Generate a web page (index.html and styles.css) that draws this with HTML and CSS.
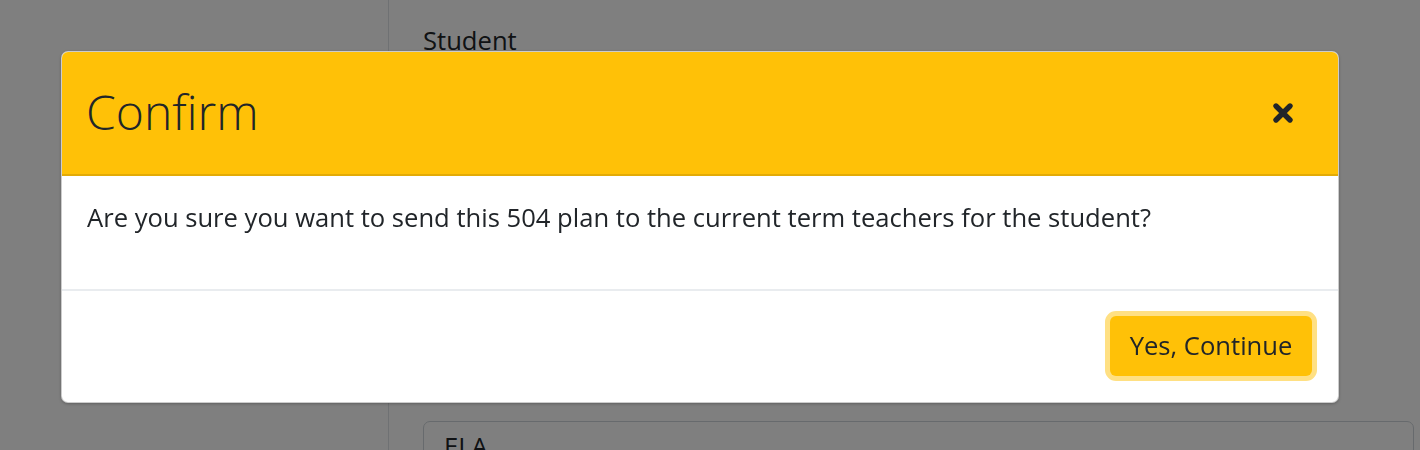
FILE: index.html
```html
<!DOCTYPE html>
<html>
<head>
<meta charset="utf-8">
<link rel="stylesheet" href="styles.css">
</head>
<body>
<div class="page">
  <aside class="sidebar"></aside>
  <main class="content">
    <div class="label">Student</div>
    <div class="spacer"></div>
    <div class="card"><div class="card-title">ELA</div></div>
  </main>
</div>
<div class="backdrop"></div>
<div class="modal">
  <div class="modal-header">
    <h2 class="modal-title">Confirm</h2>
    <button class="close" aria-label="Close">
      <svg width="22" height="22" viewBox="0 0 22 22"><path d="M4 4 L18 18 M18 4 L4 18" stroke="#212529" stroke-width="5.4" stroke-linecap="round"/></svg>
    </button>
  </div>
  <div class="modal-body">
    <p>Are you sure you want to send this 504 plan to the current term teachers for the student?</p>
  </div>
  <div class="modal-footer">
    <button class="btn-warning">Yes, Continue</button>
  </div>
</div>
</body>
</html>
```
FILE: styles.css
```css
* { box-sizing: border-box; }
html, body { margin: 0; padding: 0; }
body {
  width: 1420px;
  height: 450px;
  overflow: hidden;
  font-family: "Open Sans", "Liberation Sans", sans-serif;
  color: #212529;
  background: #fff;
}
.page {
  display: flex;
  height: 450px;
}
.sidebar {
  width: 389px;
  border-right: 1px solid #dee2e6;
  background: #fff;
}
.content {
  flex: 1;
  padding: 22px 6px 0 34px;
  display: flex;
  flex-direction: column;
}
.label {
  font-size: 25.6px;
  line-height: 38.4px;
}
.spacer { height: 360.6px; flex: none; }
.card {
  flex: none;
  border: 1px solid #ced4da;
  border-radius: 7px;
  padding: 6px 20px;
  height: 80px;
}
.card-title { font-size: 25.6px; line-height: 38.4px; }
.backdrop {
  position: fixed;
  inset: 0;
  background: rgba(0,0,0,0.5);
}
.modal {
  position: absolute;
  left: 61px;
  top: 51px;
  width: 1278px;
  background: #fff;
  border: 1px solid rgba(0,0,0,0.2);
  border-radius: 7px;
  overflow: hidden;
  box-shadow: 0 1px 3px rgba(0,0,0,0.25);
}
.modal-header {
  background: #ffc107;
  height: 124px;
  border-bottom: 2px solid #e3ab06;
  display: flex;
  align-items: center;
  justify-content: space-between;
  padding: 0 44px 0 24px;
}
.modal-title {
  margin: 0;
  font-size: 48px;
  font-weight: 300;
  line-height: 1.2;
  padding-bottom: 2px;
}
.close {
  background: none;
  border: 0;
  padding: 0;
  width: 22px;
  height: 22px;
  display: flex;
}
.modal-body {
  height: 115px;
  border-bottom: 2px solid #e9ecef;
  padding: 23px 25px 0;
}
.modal-body p {
  margin: 0;
  font-size: 25.6px;
  line-height: 38.4px;
}
.modal-footer {
  height: 111px;
  display: flex;
  align-items: center;
  justify-content: flex-end;
  padding: 0 26px 2px;
}
.btn-warning {
  font-family: "Open Sans", "Liberation Sans", sans-serif;
  background: #ffc107;
  color: #212529;
  border: 0;
  border-radius: 6px;
  width: 202px;
  height: 60px;
  font-size: 25.6px;
  padding: 0;
  box-shadow: 0 0 0 5px #ffe083;
}
```
